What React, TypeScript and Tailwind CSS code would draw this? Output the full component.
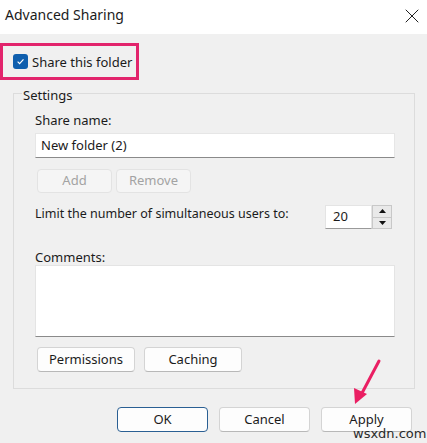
import { X } from 'lucide-react';

function Btn({ label, w, disabled, primary }: { label: string; w: string; disabled?: boolean; primary?: boolean }) {
  const base = 'flex items-center justify-center rounded-[4px] text-[13px]';
  const look = disabled
    ? 'border border-[#e3e3e3] bg-[#f5f5f5] text-[#a3a3a3]'
    : primary
      ? 'border-[1.5px] border-[#2a5f93] bg-[#fdfdfd] text-[#1b1b1b]'
      : 'border border-[#d4d4d4] border-b-[#b8b8b8] bg-[#fdfdfd] text-[#1b1b1b]';
  return <div className={`${base} ${look} ${w}`}>{label}</div>;
}

export default function App() {
  return (
    <div
      className="relative w-[427px] h-[443px] overflow-hidden bg-[#f0f0f0] text-[#1b1b1b] text-[13px]"
      style={{ fontFamily: '"Noto Sans", "Open Sans", sans-serif' }}
    >
      {/* title bar */}
      <div className="flex h-[34px] items-center justify-between bg-white pl-[5px] pr-[3px]">
        <span className="text-[14px] leading-[18px] -mt-[4px]">Advanced Sharing</span>
        <X size={24} strokeWidth={1} className="-mt-[3px] text-[#202020]" />
      </div>

      {/* share checkbox, highlighted */}
      <div className="mt-[9px] flex h-[37px] w-[139px] items-center gap-[4px] border-[3px] border-[#e2246c] pl-[10px]">
        <div className="flex h-[15px] w-[15px] items-center justify-center rounded-[3px] bg-[#0f5fae]">
          <svg width="9" height="9" viewBox="0 0 10 10">
            <path d="M1.8 5.2 L4 7.3 L8.3 2.7" fill="none" stroke="white" strokeWidth="1.3" />
          </svg>
        </div>
        <span className="leading-[18px]">Share this folder</span>
      </div>

      {/* settings group */}
      <div className="ml-[13px] mt-[13px] w-[402px] border border-[#dcdcdc] pb-[16px] pl-[21px] pr-[19px]">
        <div className="-mt-[8px] -ml-[13px] w-fit bg-[#f0f0f0] px-[1px] leading-[18px]">Settings</div>
        <div className="mt-[7px] leading-[18px]">Share name:</div>
        <div className="mt-[4px] flex h-[25px] items-center border border-[#e6e6e6] border-b-[#8a8a8a] bg-white pl-[5px]">
          New folder (2)
        </div>
        <div className="ml-[2px] mt-[11px] flex h-[24px] gap-[4px]">
          <Btn label="Add" w="w-[75px]" disabled />
          <Btn label="Remove" w="w-[75px]" disabled />
        </div>
        <div className="mt-[12px] flex h-[24px] items-start justify-between">
          <span className="text-[12.5px] leading-[18px]">Limit the number of simultaneous users to:</span>
          <div className="mr-[3px] flex h-[24px]">
            <div className="flex w-[47px] items-center border border-[#e4e4e4] border-b-[#9a9a9a] bg-white pl-[7px]">20</div>
            <div className="flex w-[20px] flex-col border border-[#c8c8c8] bg-[#e9e9e9]">
              <div className="flex flex-1 items-center justify-center border-b border-[#c8c8c8]">
                <svg width="7" height="4" viewBox="0 0 7 4"><path d="M0 4 L3.5 0 L7 4 Z" fill="#111" /></svg>
              </div>
              <div className="flex flex-1 items-center justify-center">
                <svg width="7" height="4" viewBox="0 0 7 4"><path d="M0 0 L3.5 4 L7 0 Z" fill="#111" /></svg>
              </div>
            </div>
          </div>
        </div>
        <div className="mt-[20px] leading-[16px]">Comments:</div>
        <div className="h-[72px] border border-[#e4e4e4] border-b-[#8a8a8a] bg-white" />
        <div className="ml-[2px] mt-[10px] flex h-[25px] gap-[9px]">
          <Btn label="Permissions" w="w-[98px]" />
          <Btn label="Caching" w="w-[98px]" />
        </div>
      </div>

      {/* footer buttons */}
      <div className="mt-[18px] flex h-[25px] justify-end gap-[11px] pr-[15px]">
        <Btn label="OK" w="w-[91px]" primary />
        <Btn label="Cancel" w="w-[91px]" />
        <Btn label="Apply" w="w-[91px]" />
      </div>

      {/* annotation arrow */}
      <svg className="absolute left-[345px] top-[355px]" width="40" height="55" viewBox="0 0 40 55">
        <path d="M34 6 L16 40" stroke="#ea1f63" strokeWidth="3" strokeLinecap="round" fill="none" />
        <path d="M10 49 L9 33 L22 39 Z" fill="#ea1f63" />
      </svg>

      {/* watermark */}
      <span
        className="absolute left-[353px] top-[426px] text-[13px] leading-[16px] text-[#2a2a2a]"
        style={{ fontFamily: '"DejaVu Sans", sans-serif' }}
      >
        wsxdn.com
      </span>
    </div>
  );
}
